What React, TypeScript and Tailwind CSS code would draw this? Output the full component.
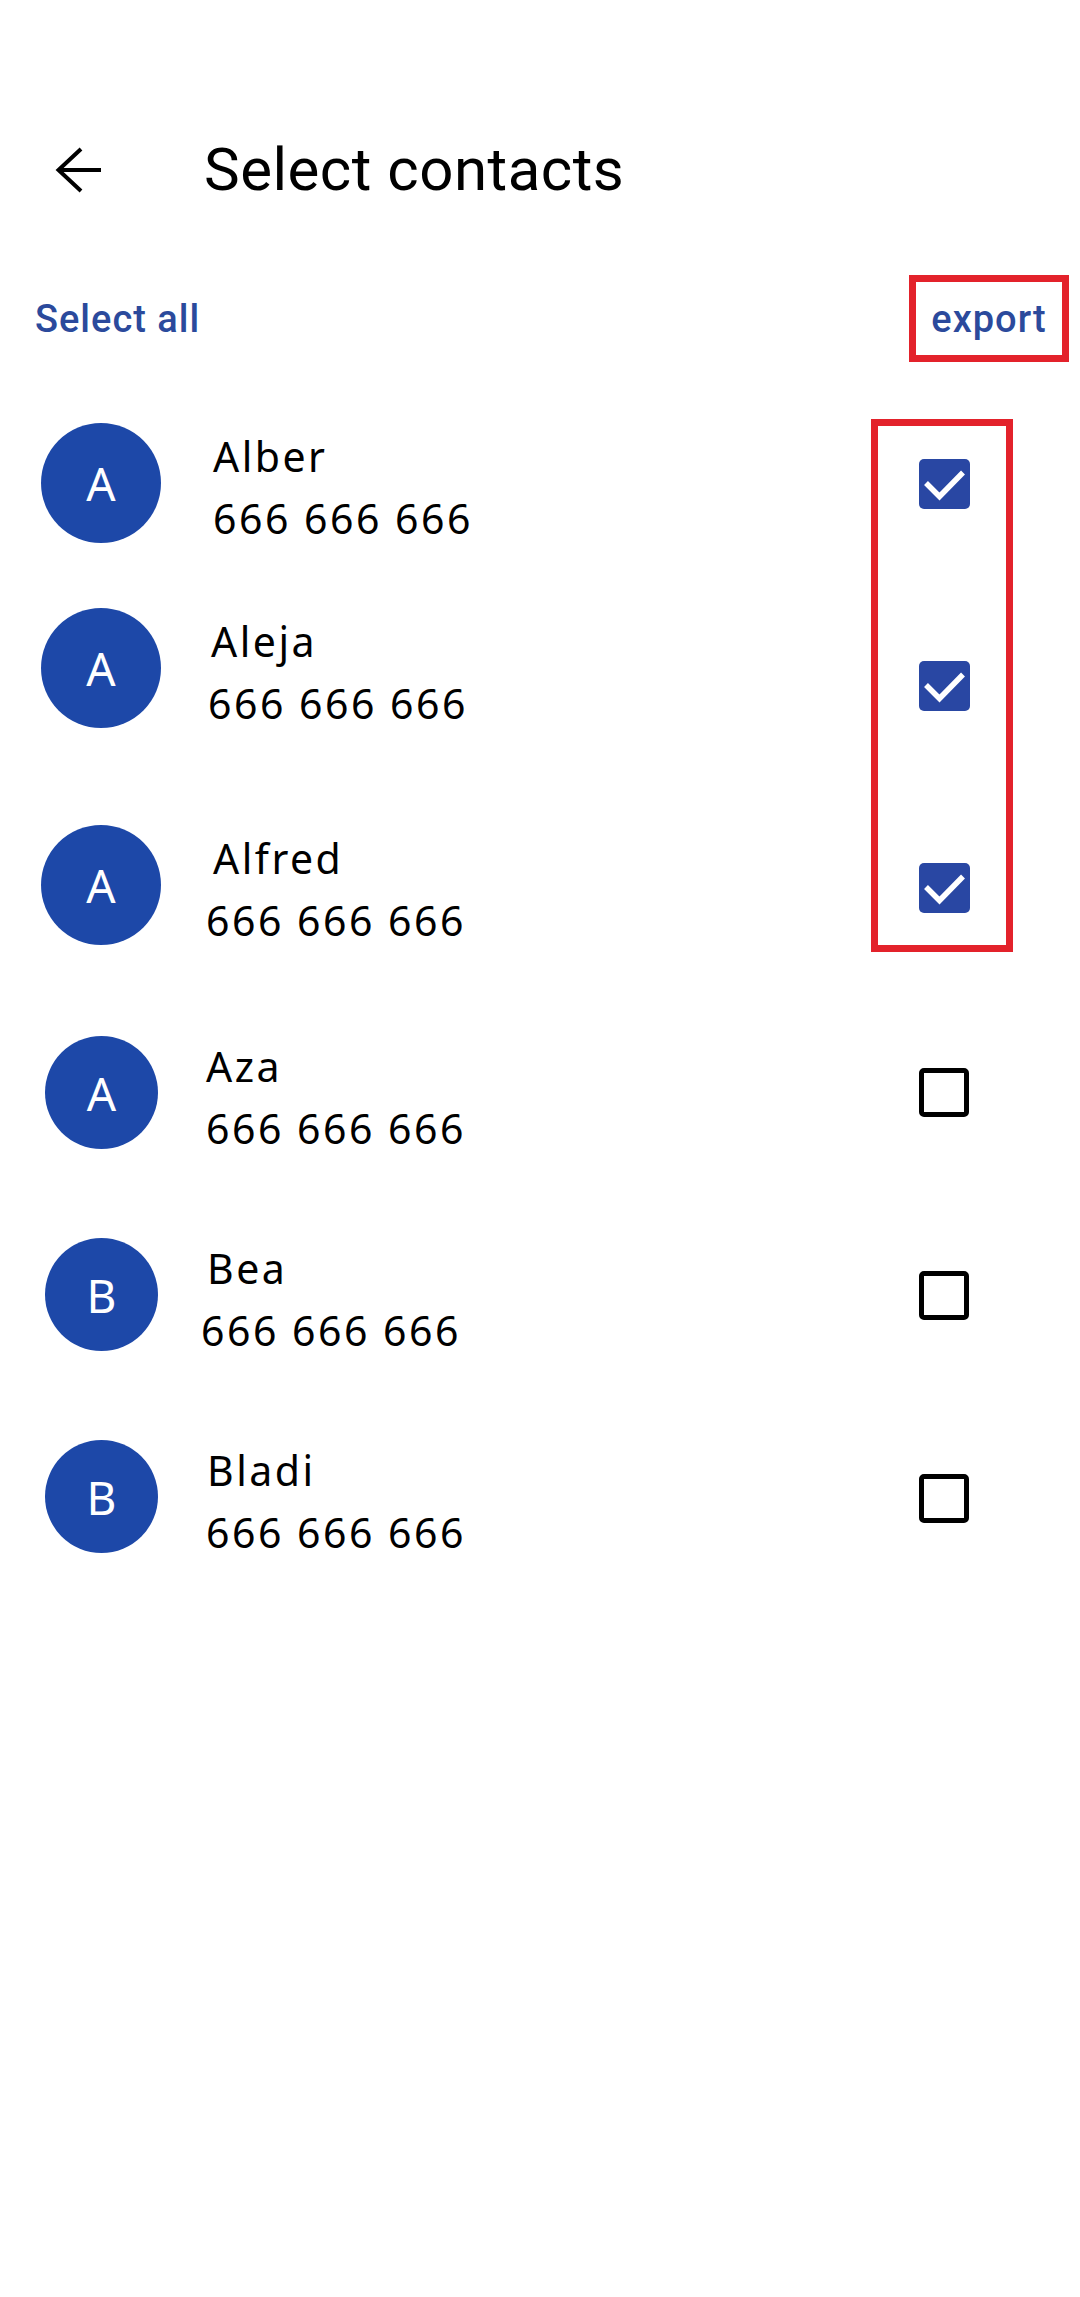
import React from "react";

interface Contact {
  name: string;
  phone: string;
  checked: boolean;
  // row spacing / geometry, written out in full so Tailwind picks them up
  rowClass: string;
  avatarClass: string;
  phoneClass: string;
}

const contacts: Contact[] = [
  { name: "Alber", phone: "666 666 666", checked: true, rowClass: "mt-[61px] h-[120px] pl-[41px] gap-[52px]", avatarClass: "h-[120px] w-[120px]", phoneClass: "" },
  { name: "Aleja", phone: "666 666 666", checked: true, rowClass: "mt-[65px] h-[120px] pl-[41px] gap-[50px]", avatarClass: "h-[120px] w-[120px]", phoneClass: "-ml-[3px]" },
  { name: "Alfred", phone: "666 666 666", checked: true, rowClass: "mt-[97px] h-[120px] pl-[41px] gap-[52px]", avatarClass: "h-[120px] w-[120px]", phoneClass: "-ml-[7px]" },
  { name: "Aza", phone: "666 666 666", checked: false, rowClass: "mt-[91px] h-[113px] pl-[45px] gap-[48px]", avatarClass: "h-[113px] w-[113px]", phoneClass: "" },
  { name: "Bea", phone: "666 666 666", checked: false, rowClass: "mt-[89px] h-[113px] pl-[45px] gap-[49px]", avatarClass: "h-[113px] w-[113px]", phoneClass: "-ml-[6px]" },
  { name: "Bladi", phone: "666 666 666", checked: false, rowClass: "mt-[89px] h-[113px] pl-[45px] gap-[49px]", avatarClass: "h-[113px] w-[113px]", phoneClass: "-ml-[1px]" },
];

function BackArrow() {
  return (
    <svg width="48" height="48" viewBox="0 0 48 48" fill="none" stroke="#000" strokeWidth="4" strokeLinejoin="miter">
      <path d="M46 24H4" />
      <path d="M26 3 3.5 24 26 45" />
    </svg>
  );
}

function CheckedBox() {
  return (
    <div className="flex h-[50px] w-[51px] items-center justify-center rounded-[5px] bg-[#2947a3]">
      <svg width="51" height="50" viewBox="0 0 51 50" fill="none" stroke="#fff" strokeWidth="5.5" strokeLinecap="butt" strokeLinejoin="miter">
        <path d="M7 24 20.5 37.5 44 13.5" />
      </svg>
    </div>
  );
}

function EmptyBox() {
  return <div className="h-[49px] w-[50px] rounded-[5px] border-[5px] border-black" />;
}

function ContactRow({ contact }: { contact: Contact }) {
  return (
    <div className={`flex items-center ${contact.rowClass}`}>
      <div className={`flex shrink-0 items-center justify-center rounded-full bg-[#1d48a8] ${contact.avatarClass}`}>
        <span className="text-[46px] leading-none text-white">{contact.name[0]}</span>
      </div>
      <div className="mt-[8px] flex flex-col text-[41px] leading-[62px] tracking-[2.5px] text-black">
        <span>{contact.name}</span>
        <span className={contact.phoneClass}>{contact.phone}</span>
      </div>
    </div>
  );
}

export default function App() {
  const checked = contacts.filter((c) => c.checked);
  const unchecked = contacts.filter((c) => !c.checked);

  return (
    <div className="min-h-[2297px] w-[1080px] bg-white pt-[122px] font-['Roboto',sans-serif]">
      {/* top app bar */}
      <div className="flex h-[96px] items-center pl-[55px]">
        <BackArrow />
        <h1 className="ml-[101px] text-[60px] leading-none font-normal tracking-[0.5px] text-black">Select contacts</h1>
      </div>

      {/* actions */}
      <div className="mt-[57px] flex h-[87px] items-center justify-between pr-[11px] pl-[35px]">
        <button className="text-[38px] leading-none font-medium tracking-[1px] text-[#2b4a9c]">Select all</button>
        <button className="flex h-[87px] w-[160px] items-center justify-center border-[7px] border-[#e3222b] text-[38px] leading-none font-medium tracking-[1px] text-[#2b4a9c]">
          export
        </button>
      </div>

      <div className="flex">
        <div className="flex flex-1 flex-col font-['Noto_Sans',sans-serif]">
          {contacts.map((c) => (
            <ContactRow key={c.name} contact={c} />
          ))}
        </div>

        <div className="mr-[67px] flex w-[142px] flex-col items-center">
          <div className="mt-[57px] flex h-[533px] w-[142px] flex-col items-center gap-[152px] border-[7px] border-[#e3222b] pt-[33px] pl-[4px]">
            {checked.map((c) => (
              <CheckedBox key={c.name} />
            ))}
          </div>
          <div className="mt-[116px] flex flex-col items-center gap-[154px] pl-[4px]">
            {unchecked.map((c) => (
              <EmptyBox key={c.name} />
            ))}
          </div>
        </div>
      </div>
    </div>
  );
}
